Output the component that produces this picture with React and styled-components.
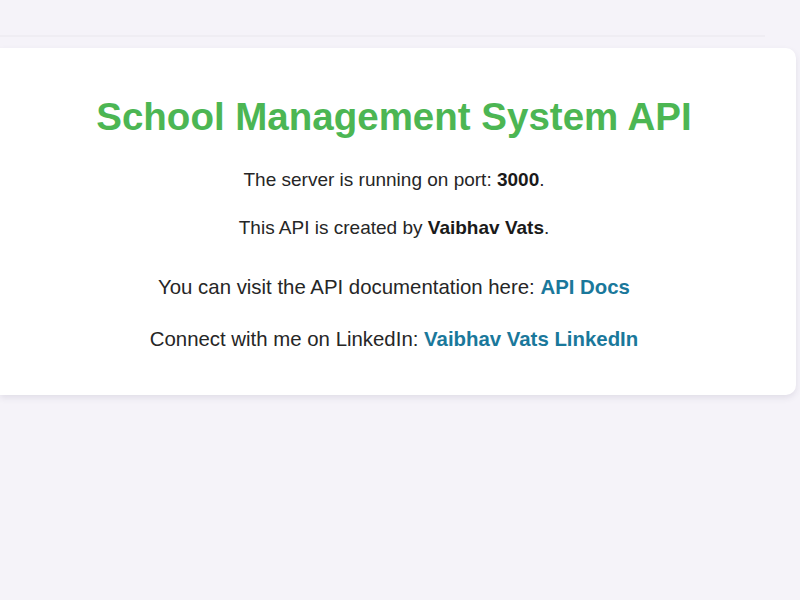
import React from "react";
import styled, { createGlobalStyle } from "styled-components";

const Global = createGlobalStyle`
  html, body { margin: 0; padding: 0; background: #f5f3f9; }
  body { font-family: "Liberation Sans", Arial, sans-serif; }
`;

const Page = styled.div`
  width: 800px;
  height: 600px;
  background: #f5f3f9;
  display: flex;
  flex-direction: column;
  overflow: hidden;
`;

const TopRule = styled.div`
  margin-top: 35px;
  width: 765px;
  height: 2px;
  background: #efedf3;
`;

const Card = styled.main`
  margin-top: 11px;
  width: 796px;
  height: 347px;
  box-sizing: border-box;
  background: #ffffff;
  border-radius: 0 10px 10px 0;
  box-shadow: 0 3px 6px rgba(60, 50, 90, 0.1);
  display: flex;
  flex-direction: column;
  align-items: center;
  padding: 47px 8px 0 0;
`;

const Title = styled.h1`
  margin: 0;
  font-size: 38.5px;
  font-weight: 700;
  color: #4cb653;
  line-height: 44px;
  white-space: nowrap;
`;

const Text = styled.p`
  margin: ${(p) => p.$mt}px 0 0;
  font-size: ${(p) => p.$size}px;
  line-height: ${(p) => p.$lh}px;
  color: #262626;
  white-space: nowrap;
`;

const Strong = styled.strong`
  font-weight: 700;
  color: #1a1a1a;
`;

const Link = styled.a`
  font-weight: 700;
  color: #1a789b;
  text-decoration: none;
`;

export default function App() {
  return (
    <Page>
      <Global />
      <TopRule />
      <Card>
        <Title>School Management System API</Title>
        <Text $size={19} $lh={23} $mt={28.5}>
          The server is running on port: <Strong>3000</Strong>.
        </Text>
        <Text $size={19} $lh={23} $mt={25}>
          This API is created by <Strong>Vaibhav Vats</Strong>.
        </Text>
        <Text $size={20.4} $lh={24} $mt={36.5}>
          You can visit the API documentation here: <Link href="#">API Docs</Link>
        </Text>
        <Text $size={20.4} $lh={24} $mt={28}>
          Connect with me on LinkedIn: <Link href="#">Vaibhav Vats LinkedIn</Link>
        </Text>
      </Card>
    </Page>
  );
}
